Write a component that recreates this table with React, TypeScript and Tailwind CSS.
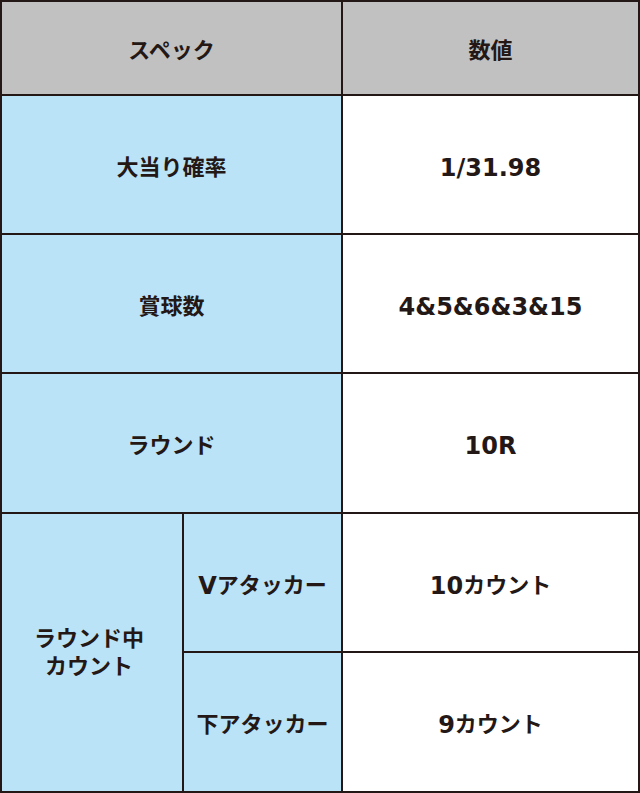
const font = { fontFamily: '"Noto Sans CJK JP", "Noto Sans", sans-serif' };
const latin = { fontFamily: '"DejaVu Sans", "Liberation Sans", sans-serif' };

const cell = "flex items-center justify-center text-center text-[22px] font-bold leading-[28px] text-[#231815]";

// digits and latin letters use a wide grotesque face, like the original
// (nudged down a little so they sit on the same line as the kana)
const Num = ({ children }: { children: string }) => (
  <span style={latin} className="relative top-[3px] text-[24px]">
    {children}
  </span>
);

const rows = [
  { label: "大当り確率", value: "1/31.98" },
  { label: "賞球数", value: "4&5&6&3&15" },
  { label: "ラウンド", value: "10R" },
];

const App = () => {
  return (
    <div style={font} className="bg-white">
      <div className="grid h-[793px] w-[640px] grid-cols-[180px_157px_295px] grid-rows-[92px_137px_137px_138px_137px_138px] gap-[2px] bg-[#231815] p-[2px]">
        <div className={`${cell} col-span-2 bg-[#c1c1c1]`}>スペック</div>
        <div className={`${cell} bg-[#c1c1c1]`}>数値</div>

        {rows.map((row) => (
          <>
            <div key={row.label} className={`${cell} col-span-2 bg-[#bbe3f8]`}>
              {row.label}
            </div>
            <div key={row.value} className={`${cell} bg-white`}>
              <Num>{row.value}</Num>
            </div>
          </>
        ))}

        <div className={`${cell} row-span-2 bg-[#bbe3f8] pb-[6px] pr-[6px]`}>
          ラウンド中
          <br />
          カウント
        </div>
        <div className={`${cell} bg-[#bbe3f8]`}>
          <Num>V</Num>アタッカー
        </div>
        <div className={`${cell} bg-white`}>
          <Num>10</Num>カウント
        </div>
        <div className={`${cell} bg-[#bbe3f8]`}>下アタッカー</div>
        <div className={`${cell} bg-white`}>
          <Num>9</Num>カウント
        </div>
      </div>
    </div>
  );
};

export default App;
